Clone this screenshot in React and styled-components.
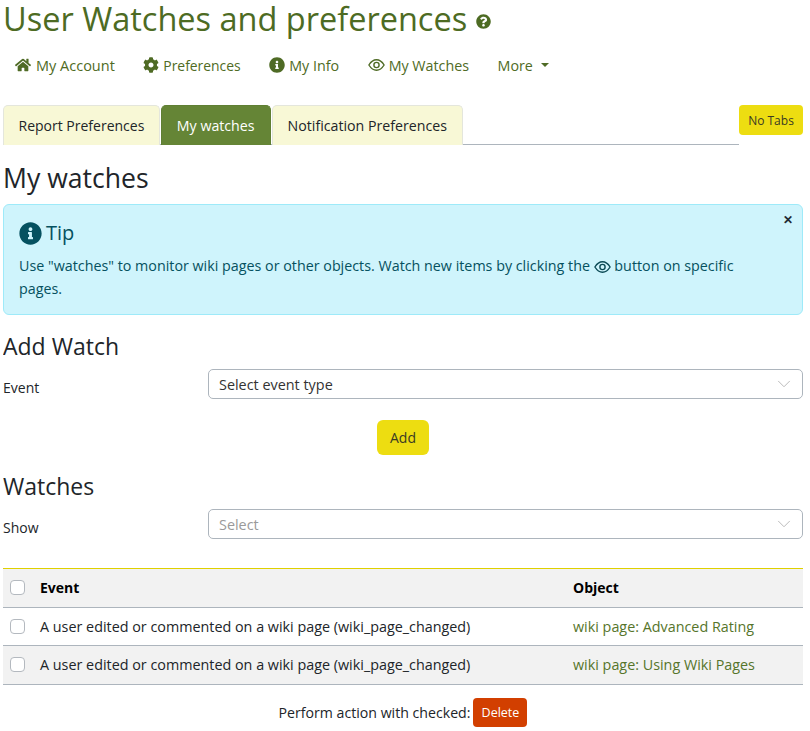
import React from 'react';
import styled, { createGlobalStyle } from 'styled-components';
import { FaHome, FaCog, FaInfoCircle, FaQuestionCircle } from 'react-icons/fa';
import { ChevronDown } from 'lucide-react';

const GlobalStyle = createGlobalStyle`
  html, body { margin: 0; padding: 0; background: #fff; }
  body { font-family: "Open Sans", "Noto Sans", sans-serif; font-size: 14px; color: #212529; }
`;

const Page = styled.div`
  width: 800px;
  margin-left: 3px;
  height: 731px;
  overflow: hidden;
`;

const Title = styled.h1`
  margin: 0;
  height: 38px;
  display: flex;
  align-items: center;
  gap: 9px;
  font-size: 32.5px;
  font-weight: 400;
  line-height: 38px;
  color: #4d6b23;
  svg { font-size: 15px; margin-top: 4px; }
`;

const Nav = styled.nav`
  display: flex;
  align-items: center;
  height: 24px;
  margin-top: 15px;
  padding-left: 12px;
  gap: 28.5px;
`;

const NavItem = styled.a`
  display: flex;
  align-items: center;
  gap: ${p => p.$gap || 4}px;
  color: #4f6b25;
  font-size: ${p => p.$size || 14.3}px;
  svg { font-size: 16px; flex: none; }
`;

const Caret = styled.span`
  width: 0;
  height: 0;
  margin-left: 4px;
  border-left: 4px solid transparent;
  border-right: 4px solid transparent;
  border-top: 4px solid #4f6b25;
`;

const TabBar = styled.div`
  display: flex;
  align-items: flex-start;
  margin-top: 28px;
`;

const TabList = styled.div`
  flex: 1;
  display: flex;
  box-sizing: border-box;
  height: 40px;
  gap: 1px;
  border-bottom: 1px solid #adb5bd;
`;

const Tab = styled.div`
  height: 40px;
  box-sizing: border-box;
  padding: 0 ${p => p.$pad || 14.5}px;
  display: flex;
  align-items: center;
  font-size: ${p => p.$size || 14}px;
  border: 1px solid ${p => (p.$active ? '#5f7f33' : '#e4e6dc')};
  border-bottom: 0;
  border-radius: 5px 5px 0 0;
  background: ${p => (p.$active ? '#658536' : '#f8f8d6')};
  color: ${p => (p.$active ? '#fff' : '#212529')};
`;

const SmallButton = styled.button`
  width: 64px;
  height: 30px;
  padding: 0;
  border: 0;
  border-radius: 4px;
  background: #eddd11;
  color: #3a3a24;
  font: 12px "Open Sans", sans-serif;
`;

const PageHeading = styled.h2`
  margin: 16px 0 0;
  font-size: 26.6px;
  line-height: 34px;
  font-weight: 400;
  color: #212529;
`;

const Alert = styled.div`
  position: relative;
  box-sizing: border-box;
  height: 111px;
  margin-top: 9px;
  padding: 15px 48px 0 15px;
  background: #cff4fc;
  border: 1px solid #9eeaf9;
  border-radius: 6px;
  color: #055160;
`;

const AlertTitle = styled.div`
  display: flex;
  align-items: center;
  gap: 4px;
  font-size: 20px;
  line-height: 26px;
  svg { font-size: 23px; }
`;

const AlertText = styled.p`
  margin: 8px 0 0;
  font-size: 14.3px;
  line-height: 23px;
  svg { vertical-align: -2px; color: #0b4a55; }
`;

const Close = styled.span`
  position: absolute;
  top: 6px;
  right: 9px;
  font-size: 12px;
  font-weight: 700;
  color: #1e2b33;
`;

const SectionHeading = styled.h3`
  margin: ${p => p.$top}px 0 0;
  font-size: 23px;
  line-height: 30px;
  font-weight: 400;
  color: #212529;
`;

const FormRow = styled.div`
  display: grid;
  grid-template-columns: 205px 1fr;
  align-items: center;
  margin-top: ${p => p.$top}px;
  font-size: 14px;
`;

const FieldLabel = styled.span`
  padding-top: 6px;
`;

const SelectBox = styled.div`
  height: 30px;
  box-sizing: border-box;
  display: flex;
  align-items: center;
  justify-content: space-between;
  padding: 0 7px 0 10px;
  border: 1px solid #adb5bd;
  border-radius: 5px;
  font-size: 14.4px;
  color: ${p => (p.$placeholder ? '#9a9a9a' : '#333')};
  svg { color: #b5b5b5; }
`;

const AddRow = styled.div`
  display: flex;
  justify-content: center;
  margin-top: 21px;
`;

const AddButton = styled.button`
  width: 52px;
  height: 35px;
  padding: 0;
  border: 0;
  border-radius: 6px;
  background: #eddd11;
  color: #3a3a24;
  font: 14px "Open Sans", sans-serif;
`;

const Table = styled.div`
  margin-top: 29px;
  border-top: 1px solid #dfd000;
`;

const Row = styled.div`
  display: grid;
  grid-template-columns: 37px 533px 1fr;
  align-items: center;
  height: 37.5px;
  border-bottom: 1px solid #adb5bd;
  background: ${p => (p.$shade ? '#f2f2f2' : '#fff')};
  font-size: ${p => (p.$head ? 14 : 14.35)}px;
  font-weight: ${p => (p.$head ? 700 : 400)};
  color: ${p => (p.$head ? '#000' : '#212529')};
`;

const Check = styled.span`
  display: block;
  box-sizing: border-box;
  width: 15px;
  height: 15px;
  margin-left: 7px;
  background: #fff;
  border: 1px solid #b4b9bf;
  border-radius: 4px;
`;

const ObjectLink = styled.a`
  color: #56752b;
`;

const Actions = styled.div`
  display: flex;
  justify-content: center;
  align-items: center;
  gap: 3px;
  margin-top: 13px;
  font-size: 14.15px;
`;

const DeleteButton = styled.button`
  width: 54px;
  height: 29px;
  padding: 0;
  border: 0;
  border-radius: 4px;
  background: #d23f00;
  color: #fff;
  font: 12.5px "Open Sans", sans-serif;
`;

// almond with a ring pupil, none of the packs has this exact one
const EyeIcon = () => (
  <svg width="17" height="12" viewBox="0 0 17 12" fill="none" stroke="currentColor" strokeWidth="1.4">
    <path d="M.9 6C3.2 2.3 5.8.8 8.5.8s5.3 1.5 7.6 5.2c-2.3 3.7-4.9 5.2-7.6 5.2S3.2 9.700.9 6Z" />
    <circle cx="8.5" cy="6" r="2.6" />
  </svg>
);

const App = () => (
  <Page>
    <GlobalStyle />
    <Title>
      User Watches and preferences
      <FaQuestionCircle />
    </Title>
    <Nav>
      <NavItem $size={14.5} $gap={5}><FaHome />My Account</NavItem>
      <NavItem $size={13.9}><FaCog />Preferences</NavItem>
      <NavItem><FaInfoCircle />My Info</NavItem>
      <NavItem><EyeIcon />My Watches</NavItem>
      <NavItem>More <Caret /></NavItem>
    </Nav>
    <TabBar>
      <TabList>
        <Tab>Report Preferences</Tab>
        <Tab $active $size={14.2} $pad={15}>My watches</Tab>
        <Tab $size={14.2} $pad={15}>Notification Preferences</Tab>
      </TabList>
      <SmallButton>No Tabs</SmallButton>
    </TabBar>
    <PageHeading>My watches</PageHeading>
    <Alert>
      <Close>✕</Close>
      <AlertTitle><FaInfoCircle />Tip</AlertTitle>
      <AlertText>
        Use "watches" to monitor wiki pages or other objects. Watch new items by clicking the <EyeIcon /> button on specific pages.
      </AlertText>
    </Alert>
    <SectionHeading $top={16}>Add Watch</SectionHeading>
    <FormRow $top={8}>
      <FieldLabel>Event</FieldLabel>
      <SelectBox>Select event type<ChevronDown size={22} strokeWidth={1} /></SelectBox>
    </FormRow>
    <AddRow><AddButton>Add</AddButton></AddRow>
    <SectionHeading $top={16}>Watches</SectionHeading>
    <FormRow $top={8}>
      <FieldLabel>Show</FieldLabel>
      <SelectBox $placeholder>Select<ChevronDown size={22} strokeWidth={1} /></SelectBox>
    </FormRow>
    <Table>
      <Row $head $shade><Check /><span>Event</span><span>Object</span></Row>
      <Row>
        <Check />
        <span>A user edited or commented on a wiki page (wiki_page_changed)</span>
        <ObjectLink>wiki page: Advanced Rating</ObjectLink>
      </Row>
      <Row $shade>
        <Check />
        <span>A user edited or commented on a wiki page (wiki_page_changed)</span>
        <ObjectLink>wiki page: Using Wiki Pages</ObjectLink>
      </Row>
    </Table>
    <Actions>
      Perform action with checked:
      <DeleteButton>Delete</DeleteButton>
    </Actions>
  </Page>
);

export default App;
